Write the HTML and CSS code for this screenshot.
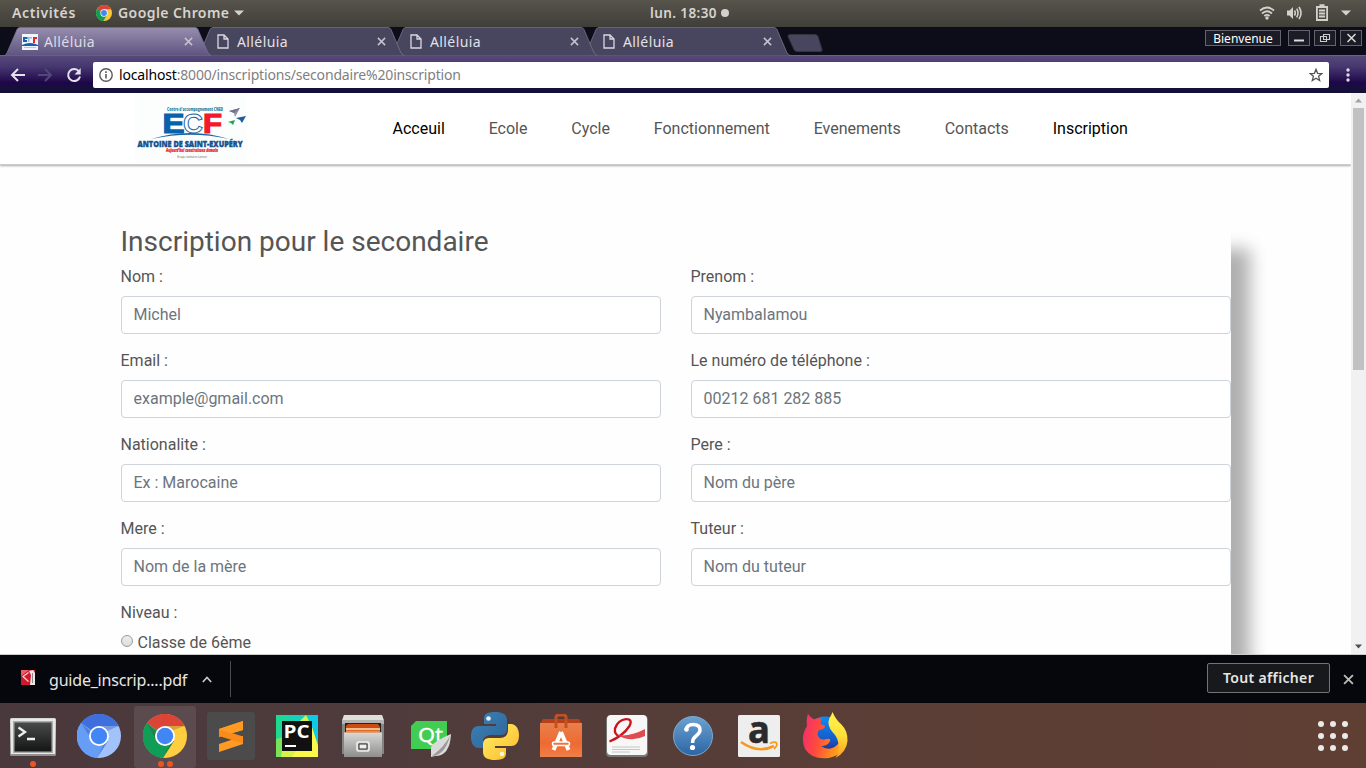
FILE: index.html
```html
<!DOCTYPE html>
<html lang="fr">
<head>
<meta charset="utf-8">
<title>Alléluia</title>
<link rel="stylesheet" href="styles.css">
</head>
<body>
<svg class="defs" width="0" height="0">
  <defs>
    <linearGradient id="gActive" x1="0" y1="0" x2="0" y2="1"><stop offset="0" stop-color="#978eae"/><stop offset="1" stop-color="#5d5380"/></linearGradient>
    <linearGradient id="gGrey" x1="0" y1="0" x2="0" y2="1"><stop offset="0" stop-color="#d8d8d6"/><stop offset="1" stop-color="#8e8e8c"/></linearGradient>
    <linearGradient id="gDark" x1="0" y1="0" x2="0" y2="1"><stop offset="0" stop-color="#484b4a"/><stop offset="1" stop-color="#141616"/></linearGradient>
    <linearGradient id="gOrange" x1="0" y1="0" x2="0" y2="1"><stop offset="0" stop-color="#e9804a"/><stop offset=".6" stop-color="#ee6a33"/><stop offset="1" stop-color="#f08046"/></linearGradient>
    <linearGradient id="gBlue" x1="0" y1="0" x2="0" y2="1"><stop offset="0" stop-color="#6ca2d2"/><stop offset="1" stop-color="#2b65a3"/></linearGradient>
    <linearGradient id="gFire" x1="0" y1=".4" x2="1" y2=".6"><stop offset="0" stop-color="#f5306a"/><stop offset=".35" stop-color="#ff4a3d"/><stop offset=".7" stop-color="#ff8a1c"/><stop offset="1" stop-color="#ffb52b"/></linearGradient>
    <linearGradient id="gFlame" x1="0" y1="0" x2="0" y2="1"><stop offset="0" stop-color="#fff44a"/><stop offset=".5" stop-color="#ffe03a"/><stop offset="1" stop-color="#ff9a1f"/></linearGradient>
    <linearGradient id="gGlobe" x1="0" y1="0" x2="0" y2="1"><stop offset="0" stop-color="#0b8df0"/><stop offset=".6" stop-color="#1559c9"/><stop offset="1" stop-color="#321a78"/></linearGradient>
    <linearGradient id="gPy1" x1="0" y1="0" x2="1" y2="1"><stop offset="0" stop-color="#3b83bb"/><stop offset="1" stop-color="#2f6394"/></linearGradient>
    <linearGradient id="gPy2" x1="0" y1="0" x2="1" y2="1"><stop offset="0" stop-color="#fff06c"/><stop offset="1" stop-color="#fdb827"/></linearGradient>
    <linearGradient id="gPc" x1="0" y1="0" x2="1" y2="0"><stop offset="0" stop-color="#1fd98d"/><stop offset="1" stop-color="#0bc9ee"/></linearGradient>
    <symbol id="page" viewBox="0 0 12 15"><path d="M1 1h6l4 4v9H1zM7 1v4h4" fill="none" stroke="#d9d8e2" stroke-width="1.3"/></symbol>
    <symbol id="cross" viewBox="0 0 10 10"><path d="M1 1l8 8M9 1L1 9" fill="none" stroke="currentColor" stroke-width="1.7"/></symbol>
    <symbol id="tab" viewBox="0 0 206 29"><path d="M0 28.5 L2 26 L12 2.500 Q13 .5 15 .5 H190 Q192 .5 193 2.500 L203 26 L206 28.500 V29 H0z" stroke="#77728b" stroke-width=".8"/></symbol>
  </defs>
</svg>

<header class="topbar">
  <span class="activities">Activités</span>
  <svg width="16" height="16" viewBox="0 0 44 44"><circle cx="22" cy="22" r="22" fill="#fcc934"/><path d="M22 22L3 11A22 22 0 0 1 41.500 12H22z" fill="#db4437"/><path d="M3 11A22 22 0 0 0 20 44L31 27 22 22z" fill="#0f9d58"/><circle cx="22" cy="22" r="10" fill="#fff"/><circle cx="22" cy="22" r="8" fill="#4285f4"/></svg>
  <span class="appname">Google Chrome</span>
  <svg class="drop" width="10" height="6" viewBox="0 0 10 6"><path d="M0 .5h10L5 5.500z" fill="#d3d1cb"/></svg>
  <div class="clock"><span>lun. 18:30</span><i></i></div>
  <div class="tray">
    <svg width="16" height="16" viewBox="0 0 16 16" fill="none" stroke="#d3d1cb" stroke-width="1.7"><path d="M1 5.500Q8-.5 15 5.500M3 8.500Q8 4 13 8.500M5.300 11Q8 8.700 10.700 11"/><circle cx="8" cy="13" r="1.700" fill="#d3d1cb" stroke="none"/></svg>
    <svg width="17" height="16" viewBox="0 0 17 16" fill="none" stroke="#d3d1cb" stroke-width="1.600"><path d="M1 5.500h2.500L7 2v12L3.500 10.500H1z" fill="#d3d1cb" stroke="none"/><path d="M8.500 5.500Q10 8 8.500 10.500M10.700 3.700Q13.300 8 10.700 12.300M13 2Q17 8 13 14"/></svg>
    <svg width="14" height="17" viewBox="0 0 14 17" fill="none" stroke="#d3d1cb" stroke-width="1.800"><path d="M1.900 3h10.200v13H1.900zM4 6.500h6M4 9.500h6M4 12.500h6"/><path d="M4.500 1.500h5" stroke-width="2.500"/></svg>
    <svg width="10" height="6" viewBox="0 0 10 6"><path d="M0 .5h10L5 5.500z" fill="#d3d1cb"/></svg>
  </div>
</header>

<div class="tabstrip">
  <div class="tab active"><svg class="shape" fill="url(#gActive)"><use href="#tab"/></svg>
    <svg class="fav" width="16" height="16" viewBox="0 0 16 16"><path d="M0 0h16v16H0z" fill="#eef5fb"/><path d="M1 3h4.500v2H3v1h2v2H1zM0 11Q8 7 16 11v1H0z" fill="#1761ac"/><path d="M6 3h4v1.500H7.500V8H6z" fill="#9eb9dc"/><path d="M11 3h4v2h-2v4h-2z" fill="#e22"/><path d="M2 13h12v1H2z" fill="#e6b6b6"/></svg>
    <span>Alléluia</span><svg class="close" width="9" height="9"><use href="#cross"/></svg></div>
  <div class="tab second"><svg class="shape" fill="#47465e"><use href="#tab"/></svg><svg class="doc" width="12" height="15"><use href="#page"/></svg><span>Alléluia</span><svg class="close" width="9" height="9"><use href="#cross"/></svg></div>
  <div class="tab third"><svg class="shape" fill="#47465e"><use href="#tab"/></svg><svg class="doc" width="12" height="15"><use href="#page"/></svg><span>Alléluia</span><svg class="close" width="9" height="9"><use href="#cross"/></svg></div>
  <div class="tab"><svg class="shape" fill="#47465e"><use href="#tab"/></svg><svg class="doc" width="12" height="15"><use href="#page"/></svg><span>Alléluia</span><svg class="close" width="9" height="9"><use href="#cross"/></svg></div>
  <svg class="newtab" width="36" height="18" viewBox="0 0 36 18"><path d="M3 .5h25q2 0 3 2l4 13q.5 2-1.500 2H10q-2 0-3-2L1 2.500Q.5.500 3 .500z" fill="#47465e" stroke="#34333f"/></svg>
  <div class="winbtns">
    <span class="welcome">Bienvenue</span>
    <b><svg width="20" height="14"><path d="M5 9.500h10" stroke="#ddd" stroke-width="2"/></svg></b>
    <b><svg width="20" height="14" fill="none" stroke="#ccc" stroke-width="1.100"><path d="M8.500 3.500h6v5h-6zM5.500 5.500h6v5h-6z"/></svg></b>
    <b><svg width="20" height="14"><path d="M6.500 3l8 8M14.500 3l-8 8" stroke="#ddd" stroke-width="1.500"/></svg></b>
  </div>
</div>

<div class="toolbar">
  <svg width="16" height="14" viewBox="0 0 16 14" fill="none" stroke="#e3e1ea" stroke-width="2"><path d="M15 7H2M8 1L2 7l6 6"/></svg>
  <svg width="16" height="14" viewBox="0 0 16 14" fill="none" stroke="#51487a" stroke-width="2"><path d="M0 7h13M7 1l6 6-6 6"/></svg>
  <svg width="16" height="16" viewBox="0 0 16 16"><path d="M13 4.500A6 6 0 1 0 14 9.500" fill="none" stroke="#e3e1ea" stroke-width="2"/><path d="M14.700 1v6.500H8.500z" fill="#e3e1ea"/></svg>
  <div class="url">
    <svg width="14" height="14" viewBox="0 0 14 14"><circle cx="7" cy="7" r="6.200" fill="none" stroke="#5a5a5a" stroke-width="1.400"/><path d="M7 6v4.500M7 3.300v1.600" stroke="#5a5a5a" stroke-width="1.600"/></svg>
    <span class="addr"><b>localhost</b>:8000/inscriptions/secondaire%20inscription</span>
    <svg class="star" width="14" height="14" viewBox="0 0 14 14"><path d="M7 1.300l1.600 4 4.300.3-3.300 2.700 1.100 4.200L7 10.200l-3.700 2.300 1.100-4.200L1.100 5.600l4.300-.3z" fill="none" stroke="#555" stroke-width="1.300"/></svg>
  </div>
  <svg class="kebab" width="4" height="14" viewBox="0 0 4 14" fill="#dedbe7"><circle cx="2" cy="2" r="1.700"/><circle cx="2" cy="7" r="1.700"/><circle cx="2" cy="12" r="1.700"/></svg>
</div>

<div class="viewport">
  <div class="page">
    <div class="sitebar">
      <svg class="logo" width="112" height="70" viewBox="0 0 112 70">
        <path d="M0 0h112v70H0z" fill="#fcfdfd"/>
        <g font-family="Open Sans,sans-serif" font-weight="800">
          <text x="32" y="16.500" font-size="4.500" textLength="56" lengthAdjust="spacingAndGlyphs" fill="#2381a3">Centre d'accompagnement CNED</text>
          <g font-family="Liberation Sans,sans-serif" font-weight="700" font-size="28"><text x="27.500" y="39" textLength="22" lengthAdjust="spacingAndGlyphs" fill="#0961ae" stroke="#0961ae" stroke-width="1.200">E</text>
          <text x="48" y="39" textLength="20" lengthAdjust="spacingAndGlyphs" fill="#fff" stroke="#18619b" stroke-width="1">C</text>
          <text x="68" y="39" textLength="19" lengthAdjust="spacingAndGlyphs" fill="#f1192b" stroke="#f1192b" stroke-width="1.200">F</text></g>
          <path d="M16 45Q56 33 94 45Q56 36.500 16 45z" fill="#1760a0"/>
          <text x="2.500" y="52.500" font-size="8.500" textLength="105" lengthAdjust="spacingAndGlyphs" fill="#11518f" stroke="#11518f" stroke-width=".4">ANTOINE DE SAINT-EXUPÉRY</text>
          <text x="31" y="58" font-size="4.800" font-style="italic" textLength="52" lengthAdjust="spacingAndGlyphs" fill="#ec1c2c" stroke="#ec1c2c" stroke-width=".2">Aujourd'hui construisons demain</text>
          <text x="42" y="63.500" font-size="3" font-weight="400" textLength="30" lengthAdjust="spacingAndGlyphs" fill="#555">Groupe institution Lannion</text>
        </g>
        <path d="M94 17l11-3-5 9-1-4z" fill="#8c8fa9"/><path d="M94 17l11-3-6 5z" fill="#6f7391"/><path d="M101 24l10-2-4 7-2-3z" fill="#1c5e9d"/><path d="M93 28l7-2-2 5-2-2z" fill="#19a54a"/>
      </svg>
      <nav><a class="on">Acceuil</a><a>Ecole</a><a>Cycle</a><a>Fonctionnement</a><a>Evenements</a><a>Contacts</a><a class="on">Inscription</a></nav>
    </div>
    <form class="panel">
      <h3>Inscription pour le secondaire</h3>
      <div class="grid">
        <label>Nom :<input placeholder="Michel"></label>
        <label>Prenom :<input placeholder="Nyambalamou"></label>
        <label>Email :<input placeholder="example@gmail.com"></label>
        <label>Le numéro de téléphone :<input placeholder="00212 681 282 885"></label>
        <label>Nationalite :<input placeholder="Ex : Marocaine"></label>
        <label>Pere :<input placeholder="Nom du père"></label>
        <label>Mere :<input placeholder="Nom de la mère"></label>
        <label>Tuteur :<input placeholder="Nom du tuteur"></label>
      </div>
      <div class="level">Niveau :</div>
      <div class="choice"><i></i>Classe de 6ème</div>
    </form>
  </div>
  <div class="scroll">
    <svg width="15" height="15"><path d="M4 9.500h7L7.500 5.500z" fill="#a3a3a3"/></svg>
    <div class="thumb"></div>
    <svg width="15" height="15"><path d="M4 5.500h7L7.500 9.500z" fill="#505050"/></svg>
  </div>
</div>

<div class="downloads">
  <svg width="15" height="17" viewBox="0 0 15 17"><path d="M0 1h14v15H0z" fill="#d0182c"/><path d="M0 1h8L0 7z" fill="#ee5b64"/><path d="M7.500 3.500L2 7.500l5.500 5" fill="none" stroke="#f6d5d6" stroke-width="1.200"/><path d="M8 2l4-1 2 3v12H9l1-10z" fill="#eee6e6"/><path d="M11.500 4v10" stroke="#888" stroke-width="1"/></svg>
  <span class="file">guide_inscrip....pdf</span>
  <svg class="chev" width="10" height="7" viewBox="0 0 10 7"><path d="M.8 6L5 1.500 9.200 6" fill="none" stroke="#c9c8c6" stroke-width="1.700"/></svg>
  <i class="sep"></i>
  <span class="all">Tout afficher</span>
  <svg class="dclose" width="11" height="11"><use href="#cross"/></svg>
</div>

<div class="dock">
  <div class="app"><svg width="46" height="46" viewBox="0 0 46 46"><rect y="5" width="46" height="38" rx="1.500" fill="url(#gGrey)"/><rect x="1" y="6" width="44" height="35" fill="#e8e8e7"/><rect x="3" y="8" width="40" height="32" fill="#aaa"/><rect x="4.500" y="9.500" width="37" height="29" fill="url(#gDark)"/><path d="M8.500 14.500l6.500 4.500L8.500 23.500M17 26h8" fill="none" stroke="#eee" stroke-width="2.300"/></svg><span class="dots"><i></i></span></div>
  <div class="app"><svg width="44" height="44" viewBox="0 0 44 44"><circle cx="22" cy="22" r="22" fill="#a1c2fa"/><path d="M22 22L4 9A22 22 0 0 1 41.500 12H22z" fill="#3f6fdc"/><path d="M4 9A22 22 0 0 0 20 44L31 27 22 22z" fill="#669df6"/><path d="M22 12h19.500L28 18zM4 9l14 22-5-14zM20 44l11-17-2-1z" fill="#234aa8" opacity=".35"/><circle cx="22" cy="22" r="10" fill="#fff"/><circle cx="22" cy="22" r="8.200" fill="#4285f4"/></svg></div>
  <div class="app running"><svg width="44" height="44" viewBox="0 0 44 44"><circle cx="22" cy="22" r="22" fill="#ffcd40"/><path d="M22 22L4 9A22 22 0 0 1 41.500 12H22z" fill="#db4437"/><path d="M4 9A22 22 0 0 0 20 44L31 27 22 22z" fill="#0f9d58"/><path d="M22 12h19.500L28 17zM4 9l9 17 0-8zM20 44l11-17-2-1z" fill="#622" opacity=".25"/><circle cx="22" cy="22" r="10" fill="#fff"/><circle cx="22" cy="22" r="8.200" fill="#4285f4"/></svg><span class="dots"><i></i><i></i></span></div>
  <div class="app"><svg width="48" height="48" viewBox="0 0 48 48"><rect width="48" height="48" rx="3" fill="#4b4b4b"/><path d="M12 17l24-8v9l-24 7z" fill="#ff9b24"/><path d="M12 32l24-8v8l-24 8z" fill="#ff9b24"/><path d="M12 17l24 7.500v7L12 24z" fill="#f98b1b"/><path d="M12 17l24-8v9l-12 3.500z" fill="#ff9b24"/></svg></div>
  <div class="app"><svg width="42" height="42" viewBox="0 0 42 42"><path d="M0 0h42v42H0z" fill="url(#gPc)"/><path d="M22 8L30 0l5 10 7 20v12H0l5-15z" fill="#d6f24a"/><path d="M36 12l6 20v10H16z" fill="#fcf84a"/><path d="M0 24l8-2-3 20H0z" fill="#79e35a"/><path d="M6 6h30v30H6z" fill="#111"/><text x="7.500" y="23" font-family="Open Sans,sans-serif" font-weight="700" font-size="18" textLength="26" lengthAdjust="spacingAndGlyphs" fill="#fff">PC</text><path d="M9 31h11" stroke="#fff" stroke-width="2"/></svg></div>
  <div class="app"><svg width="42" height="44" viewBox="0 0 42 44"><path d="M2 1h38l2 5v34H0V6z" fill="#858583"/><path d="M2 1h38l2 6H0z" fill="#dededb"/><path d="M0 6h42v4H0z" fill="#b5b5b3"/><path d="M3 9h36v9H3z" fill="#262422"/><path d="M4 12l2-2h30l2 3v6H4z" fill="#ca4b14"/><path d="M4 15h34" stroke="#ffe0b6" stroke-width="1.500"/><path d="M4 17.500h34" stroke="#f28b30" stroke-width="2"/><path d="M2 18.500h38V43H2z" fill="url(#gGrey)"/><rect x="15" y="28" width="12" height="9" rx="1.500" fill="#a9a9a9" stroke="#eee" stroke-width="1.700"/><path d="M17 30h8v5h-8z" fill="#eee" stroke="#333"/></svg></div>
  <div class="app qt"><svg width="42" height="38" viewBox="0 0 42 38"><path d="M6 2h31v28H1V7z" fill="#41cd52"/><text x="8" y="22.500" font-family="Noto Sans,sans-serif" font-size="20" fill="#fff" stroke="#fff" stroke-width=".3" textLength="25" lengthAdjust="spacingAndGlyphs">Qt</text><path d="M41 15Q40 37 25 37L21 38V28Q24 22 41 15z" fill="#dadada"/><path d="M40 17Q34 28 22 37Q35 36 40 17z" fill="#999"/></svg></div>
  <div class="app"><svg width="48" height="48" viewBox="0 0 48 48"><path d="M24 0C13 0 13 4 13 8v4h12v2H8C1 14 0 20 0 25s2 11 8 11h4v-6c0-5 4-7 8-7h10c4 0 6-3 6-6V8c0-6-5-8-12-8z" fill="url(#gPy1)"/><path d="M24 48c11 0 11-4 11-8v-4H24v-2h16c6 0 8-5 8-11s-3-11-8-11h-3v6c0 5-3 8-8 8H18c-4 0-6 3-6 6v8c0 6 5 8 12 8z" fill="url(#gPy2)"/><circle cx="17.500" cy="6.500" r="2.300" fill="#e7f1f8"/><circle cx="31" cy="42" r="2.300" fill="#fff8db"/></svg></div>
  <div class="app"><svg width="42" height="43" viewBox="0 0 42 43"><path d="M3 5h36l3 5H0z" fill="#b5401a"/><path d="M0 9h42v34H0z" fill="url(#gOrange)"/><path d="M16 14V3q0-2 3-2h4q3 0 3 2v11" fill="none" stroke="#c6501f" stroke-width="3"/><path d="M21 18l-7.500 18M21 18l7.500 18" stroke="#fff" stroke-width="4"/><rect x="12.500" y="28" width="17" height="3.500" rx="1.700" fill="#ee7440" stroke="#fff" stroke-width="1.600"/></svg></div>
  <div class="app"><svg width="42" height="43" viewBox="0 0 42 43"><rect y="2" width="42" height="41" rx="4" fill="#777"/><rect x="1" y="1" width="40" height="40" rx="4" fill="#f7f7f7"/><path d="M3.500 27.500Q17 22 23.500 12Q27 5 20 5.200Q12 6 9 14.500Q8 21 14 22.500" fill="none" stroke="#c9141e" stroke-width="2.300"/><path d="M11 21Q24 23 39 15v7Q25 29 11 21z" fill="#df4b4e"/><path d="M6 33h28M6 35.500h28M6 38h18" stroke="#c6c6c6" stroke-width="1"/></svg></div>
  <div class="app"><svg width="42" height="42" viewBox="0 0 42 42"><circle cx="21" cy="21" r="19.500" fill="url(#gBlue)" stroke="#7ba8cf" stroke-width="1"/><path d="M14 15Q15 9.500 21 9.500Q28 9.500 28 15Q28 18 24 21Q20.500 23.500 20.500 28" fill="none" stroke="#fff" stroke-width="3.500"/><circle cx="14.500" cy="14.500" r="2.300" fill="#fff"/><circle cx="20.500" cy="32.500" r="2.600" fill="#fff"/></svg></div>
  <div class="app"><svg width="42" height="42" viewBox="0 0 42 42"><rect width="42" height="42" rx="1.500" fill="#eee"/><text x="10" y="28" font-family="Open Sans,sans-serif" font-weight="700" font-size="38" textLength="22" lengthAdjust="spacingAndGlyphs" fill="#2b2b2b" stroke="#2b2b2b" stroke-width=".6">a</text><path d="M3 27Q20 39 36 31" fill="none" stroke="#f79a1b" stroke-width="2.600"/><path d="M32 28.500Q37 26 38.500 28T36 34" fill="none" stroke="#f79a1b" stroke-width="1.800"/></svg></div>
  <div class="app"><svg width="46" height="48" viewBox="0 0 46 48"><circle cx="23" cy="24" r="19.500" fill="url(#gGlobe)"/><path d="M6 2Q9 6 12 7.500Q16 5.500 20 7q-2 3-1 5l4 2q0 3-6 4-2 3-1 6 3 5 8 3 5-1 4 2-2 5-9 5 8 6 16-1 7-6 8-15l2 12q-4 13-18 16Q10 48 3 37-2 25 5 14 4 6 6 2z" fill="url(#gFire)"/><path d="M30.500 0Q34 8 39 12q7 7 6.500 17-1 11-12 17 4-6 3-14-1-7-6-12-6-7-3-14 2-3 3-6z" fill="url(#gFlame)"/></svg></div>
  <svg class="launcher" width="30" height="30" viewBox="0 0 30 30" fill="#eceae8"><circle cx="3" cy="3" r="3"/><circle cx="15" cy="3" r="3"/><circle cx="27" cy="3" r="3"/><circle cx="3" cy="15" r="3"/><circle cx="15" cy="15" r="3"/><circle cx="27" cy="15" r="3"/><circle cx="3" cy="27" r="3"/><circle cx="15" cy="27" r="3"/><circle cx="27" cy="27" r="3"/></svg>
</div>
</body>
</html>
```
FILE: styles.css
```css
* { box-sizing: border-box; }
body { margin: 0; width: 1366px; height: 768px; overflow: hidden; display: flex; flex-direction: column; font-family: "Noto Sans", sans-serif; }
svg { display: block; flex: none; }
.defs { position: absolute; }
i { font-style: normal; }

.topbar { position: relative; flex: none; height: 27px; display: flex; align-items: center; padding: 0 15px 2px 12px; background: linear-gradient(#57544c, #403e38); color: #d6d4ce; font-size: 14px; font-weight: 600; white-space: nowrap; }
.activities { width: 84px; letter-spacing: .6px; }
.appname { margin-left: 6px; width: 112px; letter-spacing: .42px; }
.drop { margin-left: 4px; }
.clock { position: absolute; left: 650px; top: 0; height: 25px; display: flex; align-items: center; font-size: 13.5px; letter-spacing: .4px; }
.clock span { width: 67px; }
.clock i { width: 8px; height: 8px; border-radius: 50%; background: #d3d1cb; margin-left: 4px; }
.tray { margin-left: auto; display: flex; align-items: center; gap: 13px; }
.tray svg:nth-child(2) { margin-left: -2px; }
.tray svg:nth-child(3) { margin-left: -1px; }
.tray svg:last-child { margin: 0 0 0 -1px; }

.tabstrip { position: relative; flex: none; height: 29px; display: flex; padding-left: 5px; background: #0c0d19; border-bottom: 1px solid #6a6388; }
.tab { position: relative; width: 193px; height: 29px; display: flex; align-items: center; padding: 0 5px 0 17px; color: #e3e1e8; font-size: 14px; letter-spacing: .4px; }
.tab.active { z-index: 4; color: #dedbe2; }
.tab.second { z-index: 3; }
.tab.third { z-index: 2; }
.shape { position: absolute; left: 0; top: 0; width: 206px; height: 29px; }
.tab > *:not(.shape) { position: relative; }
.tab .doc { margin-left: 2px; }
.tab span { margin-left: 6px; padding-bottom: 1px; }
.tab .doc + span { margin-left: 8px; }
.close { margin-left: auto; color: #c3c1cf; }
.newtab { margin: 7px 0 0 10px; }
.winbtns { display: flex; gap: 4px; margin: 3px 4px 0 auto; }
.winbtns > * { height: 16px; border: 1px solid #65646c; background: #1c1c27; font-weight: 400; }
.winbtns b { width: 22px; }
.welcome { width: 76px; margin-right: 3px; color: #fff; font-size: 12px; line-height: 15px; text-align: center; }

.toolbar { flex: none; height: 37px; display: flex; align-items: center; padding: 0 16px 0 10px; gap: 12px; background: linear-gradient(#56497a 0, #45366f 30%, #1e0749 72%, #160f3b 86%, #120f38 100%); }
.url { flex: 1; display: flex; align-items: center; height: 26px; margin: 0 5px 0 -1px; padding: 0 6px; background: #fff; border-radius: 2px; }
.addr { margin-left: 6px; padding-bottom: 1px; font-size: 14px; letter-spacing: -.17px; color: #808080; white-space: nowrap; }
.addr b { font-weight: 400; color: #000; }
.star { margin-left: auto; }

.viewport { flex: none; height: 562px; display: flex; overflow: hidden; background: #fefefe; border-bottom: 1px solid #ccc; }
.page { width: 1351px; overflow: hidden; font-family: Roboto, sans-serif; color: #555; }
.sitebar { height: 72px; display: flex; padding-left: 135px; background: #fff; border-bottom: 1px solid #ccc; box-shadow: 0 1px 2px #aaa; }
nav { display: flex; gap: 43.85px; margin-left: 145.5px; line-height: 72px; font-size: 16px; color: #555; }
nav .on { color: #000; }
.logo { margin-top: 1px; }
.panel { width: 1110px; height: 1000px; margin: 65px 0 0 120.5px; background: #fefefe; box-shadow: 19px 19px 16px #b0b0b0; }
h3 { margin: 0 0 6px; padding-top: 0; font-size: 28px; font-weight: 400; line-height: 24px; height: 29px; }
.grid { display: grid; grid-template-columns: 540px 540px; column-gap: 30px; }
.grid label { height: 84px; line-height: 24px; }
input { display: block; width: 540px; height: 38px; margin-top: 7px; padding: 5px 12px 7px; border: 1px solid #ced4da; border-radius: 4px; font: 16px Roboto, sans-serif; background: #fff; }
input::placeholder { color: #6c757d; opacity: 1; }
.level { line-height: 24px; height: 30px; }
.choice { display: flex; line-height: 24px; }
.choice i { width: 12px; height: 12px; margin: 4px 5px 0 0; border: 1px solid #999; border-radius: 50%; background: linear-gradient(#eee, #ddd); }
.scroll { width: 15px; background: #f1f1f1; display: flex; flex-direction: column; }
.thumb { width: 11px; height: 262px; margin: 0 2px auto; background: #c1c1c1; }

.downloads { flex: none; height: 48px; display: flex; align-items: center; padding: 0 12px 0 21px; background: #05070c; color: #e8e6e3; }
.downloads > svg:first-child { margin-top: -3px; }
.file { width: 139px; margin: 2px 0 0 13px; font-size: 16px; letter-spacing: -.2px; white-space: nowrap; }
.chev { margin-left: 14px; }
.sep { width: 1px; height: 36px; margin-left: 18px; background: #4b4b4b; }
.all { margin-left: auto; width: 123px; height: 30px; margin-top: -2px; border: 1px solid #727373; border-radius: 2px; background: #18191c; line-height: 28px; font-size: 14px; font-weight: 600; letter-spacing: .35px; text-align: center; }
.dclose { margin-left: 13px; color: #bcbab8; }

.dock { flex: none; height: 65px; display: flex; align-items: center; background: linear-gradient(90deg, #49383c 0, #513c3b 35%, #5b3e36 65%, #603f33 100%); }
.app { position: relative; width: 66px; height: 62px; display: flex; align-items: center; justify-content: center; }
.running::before { content: ""; position: absolute; left: 2px; top: 1px; width: 62px; height: 62px; border-radius: 3px; background: #5c4b4e; }
.running svg { position: relative; }
.qt { padding: 4px 0 0 4px; }
.dots { position: absolute; left: 0; right: 0; bottom: 0; display: flex; justify-content: center; gap: 3px; }
.dots i { width: 6px; height: 6px; border-radius: 50%; background: #e95420; }
.launcher { margin-left: auto; margin-right: 18px; }
```
